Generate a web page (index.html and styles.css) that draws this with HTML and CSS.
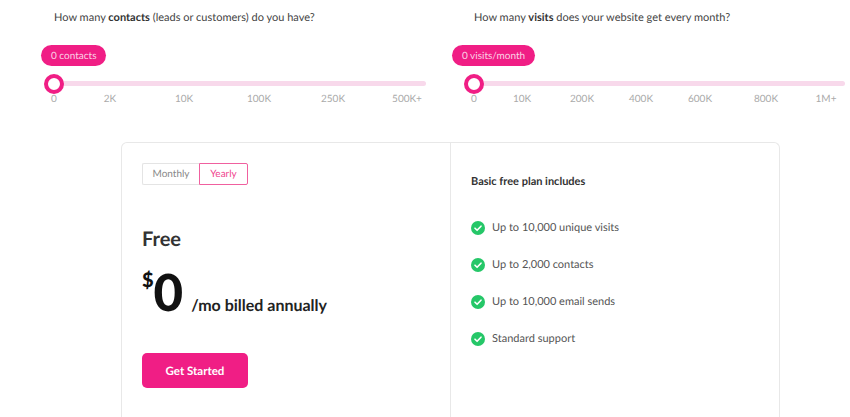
FILE: index.html
```html
<!DOCTYPE html>
<html lang="en">

<head>
    <meta charset="utf-8">
    <title>Pricing</title>
    <meta name="viewport" content="width=device-width, initial-scale=1.0">
    <link rel="stylesheet" href="styles.css">
</head>

<body>
    <!-- Sliders -->
    <section class="sliders">
        <div class="slider-box">
            <p class="question">How many <b>contacts</b> (leads or customers) do you have?</p>
            <span class="pill">0 contacts</span>
            <div class="track"><span class="thumb"></span></div>
            <div class="ticks">
                <span>0</span>
                <span>2K</span>
                <span>10K</span>
                <span>100K</span>
                <span>250K</span>
                <span>500K+</span>
            </div>
        </div>
        <div class="slider-box second">
            <p class="question">How many <b>visits</b> does your website get every month?</p>
            <span class="pill">0 visits/month</span>
            <div class="track"><span class="thumb"></span></div>
            <div class="ticks">
                <span>0</span>
                <span>10K</span>
                <span>200K</span>
                <span>400K</span>
                <span>600K</span>
                <span>800K</span>
                <span>1M+</span>
            </div>
        </div>
    </section>

    <!-- Plan card -->
    <section class="card">
        <div class="plan">
            <div class="toggle">
                <a href="#" class="toggle-month">Monthly</a>
                <a href="#" class="toggle-year">Yearly</a>
            </div>
            <h2>Free</h2>
            <div class="price">
                <sup>$</sup><span class="amount">0</span>
                <span class="period">/mo billed annually</span>
            </div>
            <a href="#" class="btn">Get Started</a>
        </div>
        <div class="includes">
            <h3>Basic free plan includes</h3>
            <ul>
                <li>
                    <svg viewBox="0 0 14 14"><circle cx="7" cy="7" r="7" fill="#25c768"/><path d="M4 7.2l2.1 2.1L10 5.2" fill="none" stroke="#fff" stroke-width="1.6" stroke-linecap="round" stroke-linejoin="round"/></svg>
                    Up to 10,000 unique visits
                </li>
                <li>
                    <svg viewBox="0 0 14 14"><circle cx="7" cy="7" r="7" fill="#25c768"/><path d="M4 7.2l2.1 2.1L10 5.2" fill="none" stroke="#fff" stroke-width="1.6" stroke-linecap="round" stroke-linejoin="round"/></svg>
                    Up to 2,000 contacts
                </li>
                <li>
                    <svg viewBox="0 0 14 14"><circle cx="7" cy="7" r="7" fill="#25c768"/><path d="M4 7.2l2.1 2.1L10 5.2" fill="none" stroke="#fff" stroke-width="1.6" stroke-linecap="round" stroke-linejoin="round"/></svg>
                    Up to 10,000 email sends
                </li>
                <li>
                    <svg viewBox="0 0 14 14"><circle cx="7" cy="7" r="7" fill="#25c768"/><path d="M4 7.2l2.1 2.1L10 5.2" fill="none" stroke="#fff" stroke-width="1.6" stroke-linecap="round" stroke-linejoin="round"/></svg>
                    Standard support
                </li>
            </ul>
        </div>
    </section>
</body>

</html>
```

FILE: styles.css
```css
* {
    margin: 0;
    padding: 0;
    box-sizing: border-box;
}

html {
    width: 850px;
    height: 417px;
    overflow: hidden;
    font-family: Lato, sans-serif;
    text-rendering: geometricPrecision;
}

body {
    width: 100%;
    height: 100%;
    background-color: #fff;
    color: #444;
    overflow: hidden;
}

/* Sliders
============================================================*/

.sliders {
    display: flex;
    gap: 48px;
    padding: 11px 0 0 54px;
}

.slider-box {
    width: 372px;
    flex-shrink: 0;
}

.slider-box.second {
    width: 371px;
}

.question {
    font-size: 11px;
    line-height: 13px;
    color: #444;
}

.question b {
    color: #333;
}

.pill {
    display: inline-block;
    height: 21px;
    margin: 21px 0 0 -13px;
    padding: 0 10px;
    border-radius: 11px;
    background-color: #f01e85;
    color: #fbd3e6;
    font-size: 10px;
    line-height: 23px;
}

.second .pill {
    margin-left: -22px;
}

.track {
    position: relative;
    height: 5px;
    margin-top: 15px;
    border-radius: 3px;
    background-color: #f8d9eb;
}

.thumb {
    position: absolute;
    left: -10px;
    top: -7px;
    width: 20px;
    height: 20px;
    border: 4px solid #f01e85;
    border-radius: 50%;
    background-color: #fff;
}

/* Each grid line is a tick position: the label is centred on its line */
.ticks {
    display: grid;
    grid-template-columns: 56px 74px 75px 74px 74px auto;
    margin-top: 7px;
    font-size: 10px;
    line-height: 13px;
    color: #aaa;
}

.second .ticks {
    grid-template-columns: 48px 60px 59px 59px 66px 60px auto;
}

.ticks span {
    justify-self: start;
    white-space: nowrap;
    transform: translateX(-50%);
}

/* Plan card
============================================================*/

.card {
    display: flex;
    width: 659px;
    height: 275px;
    margin: 36px 0 0 121px;
    border: 1px solid #e8e8e8;
    border-bottom: none;
    border-radius: 6px 6px 0 0;
}

.plan {
    width: 329px;
    padding: 20px;
    border-right: 1px solid #e8e8e8;
}

.toggle {
    display: flex;
    width: 106px;
    height: 22px;
    font-size: 10px;
    line-height: 21px;
    text-align: center;
}

.toggle a {
    text-decoration: none;
}

.toggle-month {
    width: 57px;
    border: 1px solid #e4e4e4;
    border-right: none;
    border-radius: 2px 0 0 2px;
    color: #888;
}

.toggle-year {
    width: 49px;
    border: 1px solid #f0609f;
    border-radius: 0 2px 2px 0;
    color: #f0468f;
}

h2 {
    margin-top: 42px;
    font-size: 20px;
    line-height: 24px;
    font-weight: 700;
    color: #333;
}

.price {
    display: flex;
    align-items: baseline;
    margin-top: 16px;
    height: 50px;
    color: #111;
}

.price sup {
    align-self: flex-start;
    font-size: 20px;
    line-height: 20px;
    font-weight: 900;
    margin-top: 3px;
}

.amount {
    font-size: 51px;
    line-height: 50px;
    font-weight: 900;
}

.period {
    margin-left: 8px;
    font-size: 16px;
    font-weight: 700;
    color: #222;
}

.btn {
    display: block;
    width: 106px;
    height: 35px;
    margin-top: 36px;
    border-radius: 5px;
    background-color: #f01e85;
    color: #fff;
    font-size: 11.5px;
    font-weight: 700;
    line-height: 37px;
    text-align: center;
    text-decoration: none;
}

.includes {
    flex-grow: 1;
    padding: 32px 20px;
}

h3 {
    font-size: 11px;
    line-height: 14px;
    font-weight: 700;
    color: #333;
}

ul {
    margin-top: 20px;
    list-style: none;
}

li {
    display: flex;
    align-items: center;
    gap: 7px;
    height: 37px;
    font-size: 11px;
    color: #555;
}

li svg {
    width: 14px;
    height: 14px;
}
```
